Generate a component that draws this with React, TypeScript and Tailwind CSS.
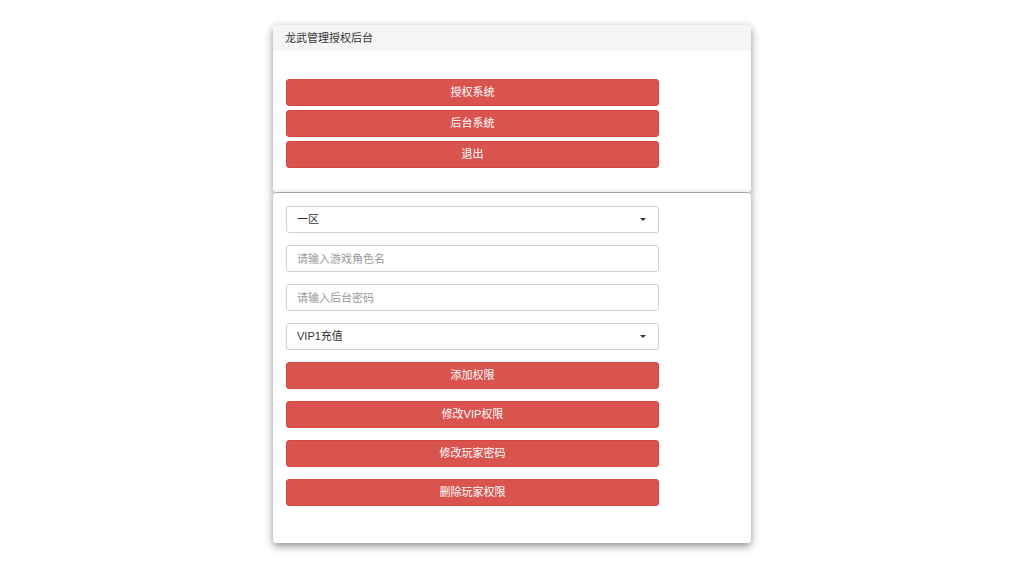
import React, { useState } from 'react';

const font = { fontFamily: '"Liberation Sans", "Noto Sans CJK SC", sans-serif' };

const RedButton: React.FC<{ label: string }> = ({ label }) => (
  <button className="w-[373px] h-[27px] rounded-[3px] bg-[#d9534f] border border-[#d7463f] text-white text-[11px] flex items-center justify-center">
    {label}
  </button>
);

const SelectBox: React.FC<{ value: string; options: string[] }> = ({ value, options }) => {
  const [v, setV] = useState(value);
  return (
    <div className="relative w-[373px] h-[27px]">
      <select
        value={v}
        onChange={(e) => setV(e.target.value)}
        className="appearance-none w-full h-full rounded-[3px] border border-[#d0d0d0] bg-white pl-[10px] text-[11px] text-[#333] outline-none"
      >
        {options.map((o) => (
          <option key={o} value={o}>{o}</option>
        ))}
      </select>
      <span className="absolute right-[13px] top-[12px] w-0 h-0 border-l-[3px] border-r-[3px] border-t-[3px] border-l-transparent border-r-transparent border-t-[#333] pointer-events-none" />
    </div>
  );
};

const TextInput: React.FC<{ placeholder: string; type?: string }> = ({ placeholder, type = 'text' }) => (
  <input
    type={type}
    placeholder={placeholder}
    className="w-[373px] h-[27px] rounded-[3px] border border-[#d0d0d0] bg-white px-[10px] text-[11px] text-[#333] placeholder:text-[#999] outline-none"
  />
);

export default function App() {
  return (
    <div className="min-h-[574px] w-full bg-white pt-[25px]" style={font}>
      <div className="mx-auto w-[478px] flex flex-col gap-[1px]">
        {/* top panel */}
        <div className="rounded-[3px] bg-white shadow-[0_3px_9px_rgba(0,0,0,0.45)] overflow-hidden">
          <div className="h-[26px] bg-[#f5f5f5] pl-[12px] flex items-center text-[11px] text-[#333]">
            龙武管理授权后台
          </div>
          <div className="pt-[28px] pb-[24px] pl-[13px] flex flex-col gap-[4px]">
            <RedButton label="授权系统" />
            <RedButton label="后台系统" />
            <RedButton label="退出" />
          </div>
        </div>

        {/* bottom panel */}
        <div className="rounded-[3px] bg-white shadow-[0_3px_9px_rgba(0,0,0,0.45)] pt-[13px] pb-[37px] pl-[13px] flex flex-col gap-[12px]">
          <SelectBox value="一区" options={['一区', '二区', '三区']} />
          <TextInput placeholder="请输入游戏角色名" />
          <TextInput placeholder="请输入后台密码" type="password" />
          <SelectBox value="VIP1充值" options={['VIP1充值', 'VIP2充值', 'VIP3充值']} />
          <RedButton label="添加权限" />
          <RedButton label="修改VIP权限" />
          <RedButton label="修改玩家密码" />
          <RedButton label="删除玩家权限" />
        </div>
      </div>
    </div>
  );
}
